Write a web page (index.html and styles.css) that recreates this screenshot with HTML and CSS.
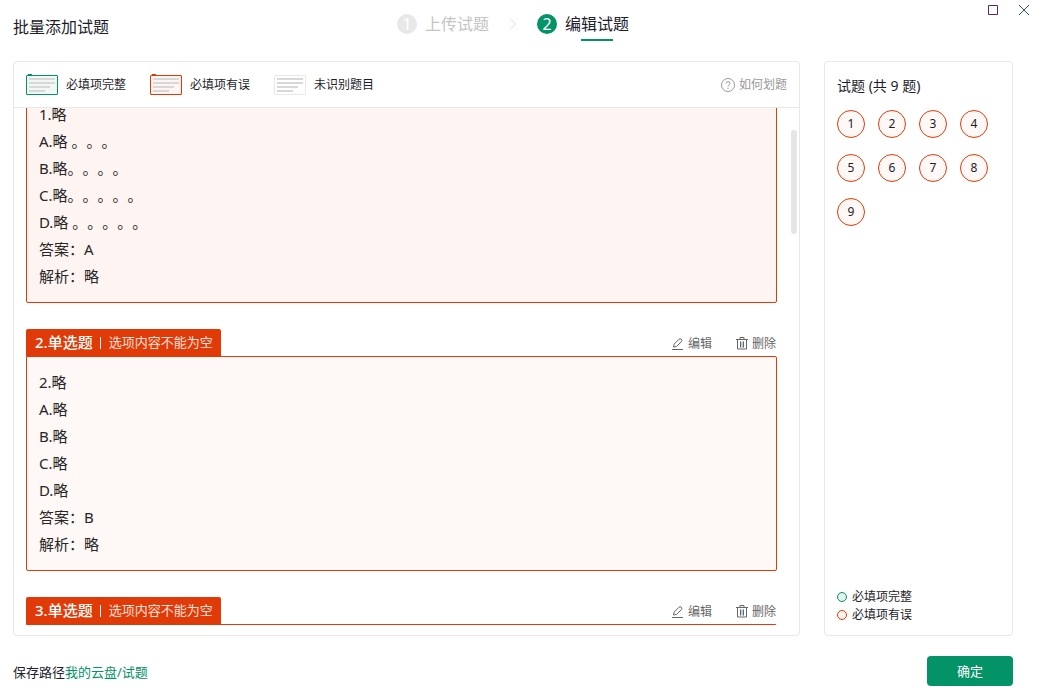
FILE: index.html
```html
<!DOCTYPE html>
<html lang="zh-CN">
<head>
<meta charset="utf-8">
<title>批量添加试题</title>
<link rel="stylesheet" href="styles.css">
</head>
<body>
<svg class="sprite" aria-hidden="true">
  <symbol id="doc-lines" viewBox="0 0 26 14">
    <path d="M0 1h26M0 5h26M0 9h21M0 13h16" stroke="#d8d8d8" stroke-width="2"/>
  </symbol>
  <symbol id="pen" viewBox="0 0 12 12">
    <path d="M1.5 9 2.2 6.1 6.9 1.3Q8 .2 9.3 1.2 10.5 2.3 9.3 3.7L4.6 8.4ZM0 11.5H11" fill="none" stroke="#666"/>
  </symbol>
  <symbol id="trash" viewBox="0 0 12 13">
    <path d="M4 4.5H8V10.5H4Z" fill="#b9cfe6"/>
    <path d="M4 2V.5H8V2M0 2.5H12M1.5 2.5V12H10.5V2.5M4.5 4.5V10.5M7.5 4.5V10.5" fill="none" stroke="#666"/>
  </symbol>
</svg>
<div class="window-controls">
  <button type="button" aria-label="最大化"><svg width="10" height="10"><path d="M.5.5h9v9h-9z" fill="none" stroke="#5b2a5e"/></svg></button>
  <button type="button" aria-label="关闭"><svg width="10" height="10"><path d="M0 0 10 10M10 0 0 10" fill="none" stroke="#34506e"/></svg></button>
</div>
<header class="header">
  <h1 class="title">批量添加试题</h1>
  <ol class="steps">
    <li class="step"><span class="step-num">1</span><span>上传试题</span></li>
    <li class="step-arrow"><svg width="8" height="12"><path d="M1 .5 6.5 6 1 11.5" fill="none" stroke="#dcdcdc"/></svg></li>
    <li class="step active"><span class="step-num">2</span><span class="step-label">编辑试题</span></li>
  </ol>
</header>
<main class="main">
  <section class="panel editor">
    <div class="toolbar">
      <span class="legend"><i class="doc ok"><svg><use href="#doc-lines"/></svg></i>必填项完整</span>
      <span class="legend"><i class="doc bad"><svg><use href="#doc-lines"/></svg></i>必填项有误</span>
      <span class="legend"><i class="doc"><svg><use href="#doc-lines"/></svg></i>未识别题目</span>
      <a class="help" href="#"><svg width="14" height="14" fill="none" stroke="#999"><circle cx="7" cy="7" r="6.5"/><path d="M5 5.6Q5 3.6 7 3.6T9 5.4Q9 6.4 8 6.9 7 7.4 7 8.6M7 9.8V11"/></svg>如何划题</a>
    </div>
    <div class="scroller">
      <article class="card first">
        <p>1.略</p><p>A.略 。。。</p><p>B.略。。。。</p><p>C.略。。。。。</p><p>D.略 。。。。。</p><p>答案：A</p><p>解析：略</p>
      </article>
      <div class="card-head">
        <h2 class="tag">2.单选题<span class="reason">选项内容不能为空</span></h2>
        <div class="actions">
          <button type="button"><svg width="12" height="12"><use href="#pen"/></svg>编辑</button>
          <button type="button"><svg width="12" height="13"><use href="#trash"/></svg>删除</button>
        </div>
      </div>
      <article class="card">
        <p>2.略</p><p>A.略</p><p>B.略</p><p>C.略</p><p>D.略</p><p>答案：B</p><p>解析：略</p>
      </article>
      <div class="card-head">
        <h2 class="tag">3.单选题<span class="reason">选项内容不能为空</span></h2>
        <div class="actions">
          <button type="button"><svg width="12" height="12"><use href="#pen"/></svg>编辑</button>
          <button type="button"><svg width="12" height="13"><use href="#trash"/></svg>删除</button>
        </div>
      </div>
      <article class="card"></article>
    </div>
    <div class="thumb"></div>
  </section>
  <aside class="panel side">
    <h2 class="side-title">试题 (共 9 题)</h2>
    <div class="numbers">
      <button type="button">1</button><button type="button">2</button><button type="button">3</button><button type="button">4</button><button type="button">5</button><button type="button">6</button><button type="button">7</button><button type="button">8</button><button type="button">9</button>
    </div>
    <ul class="states">
      <li><i class="dot ok"></i>必填项完整</li>
      <li><i class="dot bad"></i>必填项有误</li>
    </ul>
  </aside>
</main>
<footer class="footer">
  <p class="path">保存路径<a href="#">我的云盘/试题</a></p>
  <button type="button" class="confirm">确定</button>
</footer>
</body>
</html>
```
FILE: styles.css
```css
* { box-sizing: border-box; margin: 0; padding: 0; }
body {
  display: flex;
  flex-direction: column;
  height: 100vh;
  padding: 0 36px 0 13px;
  background: #fff;
  color: #1d1d2b;
  font: 12px/18px "Noto Sans", "Noto Sans CJK SC", sans-serif;
  text-spacing-trim: space-all;
}
button { border: 0; background: none; font: inherit; color: inherit; cursor: pointer; }
a { text-decoration: none; }
ol, ul { list-style: none; }
i { font-style: normal; }
svg { display: block; flex: none; }
.sprite { position: absolute; width: 0; height: 0; }

.window-controls { position: absolute; top: 5px; right: 20px; display: flex; gap: 21px; }

.header { display: grid; grid-template-columns: 1fr auto 1fr; height: 61px; flex: none; }
.title { padding-top: 15px; font-size: 16px; font-weight: 400; line-height: 24px; }
.steps { display: flex; align-items: center; gap: 20px; height: 48px; font-size: 16px; line-height: 24px; }
.step { display: flex; align-items: center; gap: 8px; color: #c4c4c4; }
.step-num {
  width: 20px; height: 20px; border-radius: 50%;
  background: #e8e8e8; color: #fff; line-height: 20px; text-align: center;
}
.step.active { color: #1d1d2b; }
.active .step-num { background: #049267; }
.step-label { position: relative; }
.step-label::after {
  content: ""; position: absolute; left: 16px; right: 16px; bottom: -5px;
  height: 2px; background: #049267;
}

.main { display: flex; gap: 24px; flex: 1; min-height: 0; }
.panel { border: 1px solid #e8e8e8; border-radius: 4px; }
.editor { position: relative; display: flex; flex-direction: column; flex: 1; min-width: 0; padding-bottom: 10px; }
.toolbar {
  display: flex; align-items: center; gap: 24px; flex: none;
  height: 46px; padding: 0 12px; border-bottom: 1px solid #e8e8e8; line-height: 20px;
}
.legend { display: flex; align-items: center; gap: 8px; }
.doc {
  position: relative; width: 32px; height: 20px; padding: 2px;
  border: 1px solid #e8e8e8; border-radius: 1px;
}
.doc svg { width: 26px; height: 14px; }
.doc.ok { border-color: #049267; background: #f0f8f5; }
.doc.bad { border-color: #e03a08; background: #fef4f1; }
.doc.ok::before, .doc.bad::before {
  content: ""; position: absolute; left: 1px; top: -2px; width: 4px; height: 2px; background: #049267;
}
.doc.bad::before { background: #e03a08; }
.help { display: flex; align-items: center; gap: 4px; margin-left: auto; color: #999; }

.scroller { flex: 1; min-height: 0; overflow: hidden; padding: 0 22px 0 12px; }
.card {
  min-height: 215px; padding: 12px; border: 1px solid #e03a08; border-radius: 0 2px 2px 2px;
  background: #fef8f6; color: #262626; font-size: 15px; line-height: 27px;
}
.card.first { margin-top: -20px; background: #fef4f1; }
.card-head { display: flex; justify-content: space-between; height: 27px; margin-top: 26px; }
.tag {
  display: flex; align-items: center; padding: 0 8px 0 9px; border-radius: 2px 2px 0 0;
  background: #e03a08; color: #fff; font-size: 15px; font-weight: 500; line-height: 27px;
}
.reason { display: flex; align-items: center; color: #fbe0d8; font-size: 13px; font-weight: 400; }
.reason::before { content: ""; width: 1px; height: 12px; margin: 0 8px 0 7px; background: #fff; }
.actions { display: flex; gap: 24px; padding: 2px 1px 0 0; color: #666; }
.actions button { display: flex; align-items: center; gap: 4px; }
.thumb {
  position: absolute; top: 68px; right: 2px; width: 6px; height: 104px;
  border-radius: 3px; background: #e5e5e5;
}

.side { display: flex; flex-direction: column; flex: 0 0 189px; padding: 14px 12px 11px; }
.side-title { margin-bottom: 14px; font-size: 14px; font-weight: 400; line-height: 20px; }
.numbers { display: flex; flex-wrap: wrap; gap: 16px 13px; }
.numbers button {
  width: 28px; height: 28px; border: 1px solid #e03a08; border-radius: 50%;
  background: #fef8f6;
}
.states { margin-top: auto; }
.states li { display: flex; align-items: center; gap: 5px; }
.dot { width: 10px; height: 10px; border: 1px solid #049267; border-radius: 50%; background: #e1f2ec; }
.dot.bad { border-color: #e03a08; background: #fef4f1; }

.footer { display: flex; justify-content: space-between; flex: none; height: 56px; padding-top: 20px; font-size: 13px; }
.path { line-height: 32px; }
.path a { color: #049267; }
.confirm { width: 86px; height: 30px; border-radius: 4px; background: #049267; color: #fff; }
```
